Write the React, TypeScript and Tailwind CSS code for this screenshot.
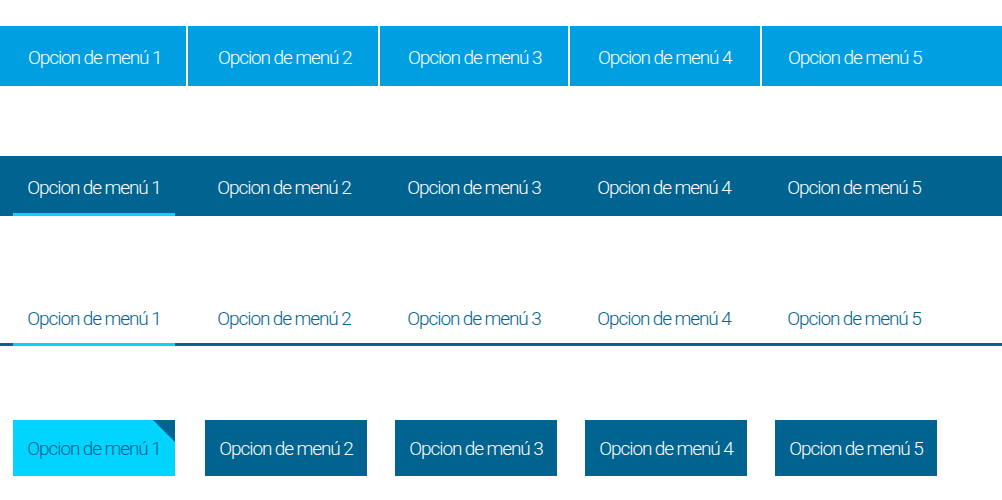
import React from "react";

const labels = ["Opcion de menú 1", "Opcion de menú 2", "Opcion de menú 3", "Opcion de menú 4", "Opcion de menú 5"];
const font = { fontFamily: "Roboto, 'Open Sans', sans-serif" };

export default function App() {
  const row1Widths = ["w-[186px]", "w-[190px]", "w-[188px]", "w-[190px]", "flex-1"];
  const row1Pads = ["pl-[28px]", "pl-[30px]", "pl-[28px]", "pl-[28px]", "pl-[26px]"];
  return (
    <div className="w-[1002px] h-[500px] bg-white overflow-hidden font-light text-[19px] tracking-[-1.1px]" style={font}>
      {/* Row 1 */}
      <div className="mt-[26px] flex h-[60px] gap-[2px]">
        {labels.map((l, i) => (
          <div key={l} className={`${row1Widths[i]} ${row1Pads[i]} bg-[#009fe2] text-white flex items-center pt-[5px]`}>
            {l}
          </div>
        ))}
      </div>
      {/* Row 2 */}
      <div className="mt-[70px] flex h-[60px] bg-[#006390] pl-[13px]">
        {labels.map((l, i) => (
          <div key={l} className="relative w-[162px] mr-[28px] flex items-center justify-center text-white pt-[5px]">
            {l}
            {i === 0 && <div className="absolute left-0 right-0 bottom-0 h-[3px] bg-[#00d4ff]" />}
          </div>
        ))}
      </div>
      {/* Row 3 */}
      <div className="mt-[70px] flex h-[60px] border-b-[3px] border-[#006390] pl-[13px]">
        {labels.map((l, i) => (
          <div key={l} className="relative w-[162px] mr-[28px] flex items-center justify-center text-[#006390] pt-[9px]">
            {l}
            {i === 0 && <div className="absolute left-0 right-0 bottom-[-3px] h-[3px] bg-[#00d4ff]" />}
          </div>
        ))}
      </div>
      {/* Row 4 */}
      <div className="mt-[74px] flex pl-[13px]">
        {labels.map((l, i) => (
          <div
            key={l}
            className={`relative w-[162px] h-[56px] flex items-center justify-center pt-[3px] ${
              i === 0 ? "bg-[#00d4ff] text-[#006390] mr-[30px]" : "bg-[#006390] text-white mr-[28px]"
            }`}
          >
            {l}
            {i === 0 && (
              <div className="absolute top-0 right-0 w-0 h-0 border-t-[22px] border-l-[22px] border-t-[#006390] border-l-transparent" />
            )}
          </div>
        ))}
      </div>
    </div>
  );
}
